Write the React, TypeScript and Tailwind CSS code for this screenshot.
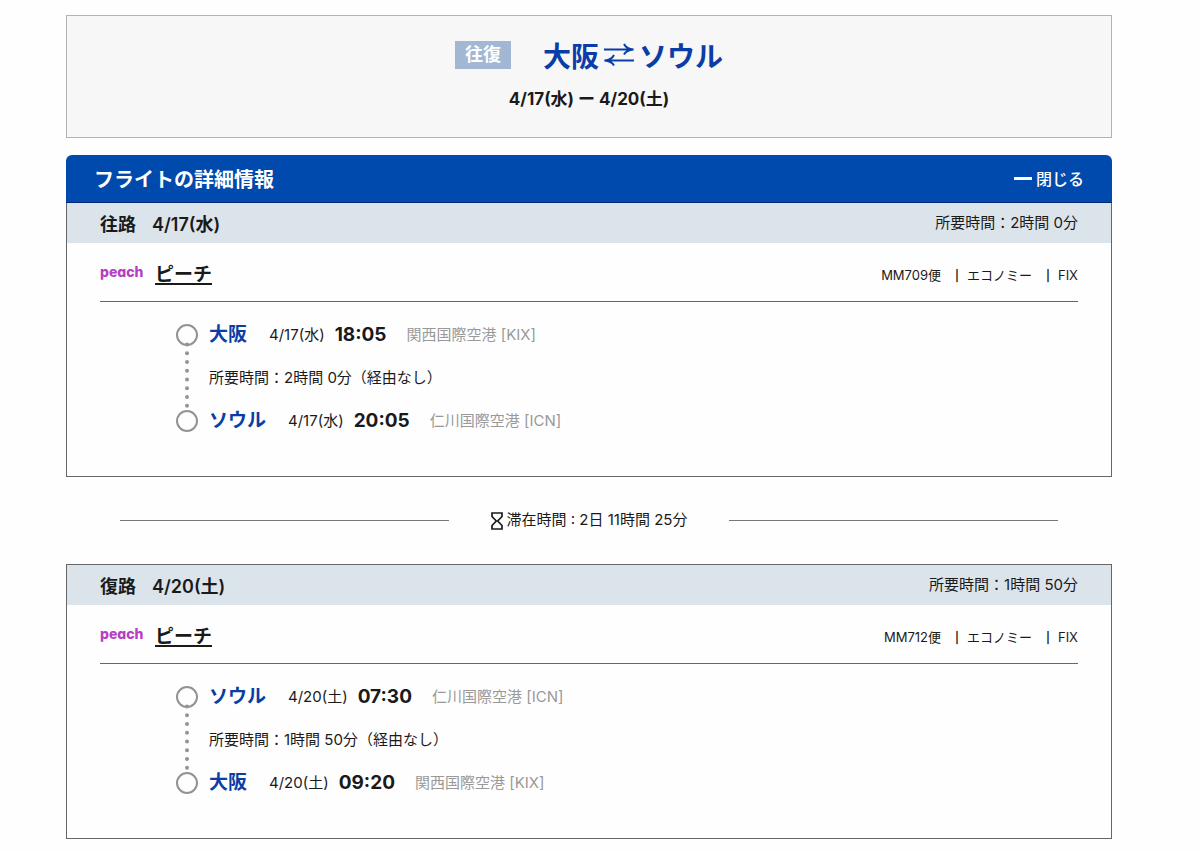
import { useState } from 'react';

type Stop = {
  city: string;
  time: string;
  airport: string;
};

type Flight = {
  label: string;
  date: string;
  duration: string;
  flightNo: string;
  from: Stop;
  to: Stop;
};

const osaka = { city: '大阪', airport: '関西国際空港 [KIX]' };
const seoul = { city: 'ソウル', airport: '仁川国際空港 [ICN]' };

const outbound: Flight = {
  label: '往路',
  date: '4/17(水)',
  duration: '2時間 0分',
  flightNo: 'MM709便',
  from: { ...osaka, time: '18:05' },
  to: { ...seoul, time: '20:05' },
};

const inbound: Flight = {
  label: '復路',
  date: '4/20(土)',
  duration: '1時間 50分',
  flightNo: 'MM712便',
  from: { ...seoul, time: '07:30' },
  to: { ...osaka, time: '09:20' },
};

function RoundTripArrows() {
  return (
    <svg className="mb-1 h-6 w-8" viewBox="0 0 32 24" fill="none" stroke="currentColor" strokeWidth="2" aria-hidden="true">
      <path d="M1 6.500h29M21 1c1.500 3 4.500 5 9.500 5.500c-5 .5-8 2-9.500 5" />
      <path d="M31 17.500H2M11 12c-1.500 3-4.500 5-9.500 5.500c5 .5 8 2 9.500 5" />
    </svg>
  );
}

function Hourglass() {
  return (
    <svg className="h-[18px] w-3" viewBox="0 0 12 18" fill="none" stroke="currentColor" strokeWidth="1.7" aria-hidden="true">
      <path d="M1 1h10v3.500L6.700 9L11 13.500V17H1v-3.500L5.300 9L1 4.500z" />
    </svg>
  );
}

function RouteLine() {
  return (
    <svg className="h-[108px] w-[22px] shrink-0" viewBox="0 0 22 108" fill="none" stroke="#939393" aria-hidden="true">
      <circle cx="11" cy="11" r="10" strokeWidth="2" />
      <path d="M11 20.500V86" strokeWidth="4" strokeLinecap="round" strokeDasharray="0 8.750" />
      <circle cx="11" cy="97" r="10" strokeWidth="2" />
    </svg>
  );
}

function StopRow({ stop, date }: { stop: Stop; date: string }) {
  return (
    <p className="flex h-[22px] items-center text-[15px]">
      <span className="text-[19px] font-bold text-[#0a3da6]">{stop.city}</span>
      <span className="ml-[22px]">{date}</span>
      <time className="ml-[10px] text-[19px] font-bold">{stop.time}</time>
      <span className="ml-5 text-[#999]">{stop.airport}</span>
    </p>
  );
}

function FlightDetail({ flight }: { flight: Flight }) {
  return (
    <>
      <div className="flex h-10 items-center justify-between bg-[#dce4eb] px-[33px]">
        <h3 className="flex gap-4 pt-1 text-lg font-semibold">
          <span>{flight.label}</span>
          <span>{flight.date}</span>
        </h3>
        <p className="text-[15px]">所要時間：{flight.duration}</p>
      </div>
      <div className="px-[33px] pb-11">
        <div className="flex h-[59px] items-center justify-between border-b border-[#666] pt-[6px]">
          <div className="flex items-center gap-3">
            <span className="w-[43px] pb-[6px] text-[14px] leading-5 font-extrabold text-[#b83fc4] [font-feature-settings:'cv11']">
              peach
            </span>
            <a href="#peach" className="text-[19px] font-semibold underline decoration-2 underline-offset-2">
              ピーチ
            </a>
          </div>
          <ul className="flex items-center pt-[2px] text-[13px]">
            <li>{flight.flightNo}</li>
            <li className="ml-[14px] flex items-center gap-2">
              <span className="text-[11px] font-semibold">|</span>エコノミー
            </li>
            <li className="ml-[14px] flex items-center gap-2">
              <span className="text-[11px] font-semibold">|</span>FIX
            </li>
          </ul>
        </div>
        <div className="flex gap-[11px] pt-[22px] pl-[76px]">
          <RouteLine />
          <div className="flex flex-col justify-between">
            <StopRow stop={flight.from} date={flight.date} />
            <p className="text-[15px] leading-[22px]">所要時間：{flight.duration}（経由なし）</p>
            <StopRow stop={flight.to} date={flight.date} />
          </div>
        </div>
      </div>
    </>
  );
}

export default function App() {
  const [open, setOpen] = useState(true);

  return (
    <main
      lang="ja"
      className="min-h-screen bg-[#fefefe] pt-[15px] pr-[88px] pb-3 pl-[66px] font-['Inter','Noto_Sans_CJK_JP',sans-serif] text-[#1a1a1a]"
    >
      <header className="flex h-[123px] flex-col items-center border border-[#b3b3b3] bg-[#f7f7f7] pt-5">
        <div className="flex items-center gap-8">
          <span className="mb-1 flex h-7 items-center bg-[#a2b7d3] px-[10px] text-lg font-bold text-white">往復</span>
          <h1 className="flex items-center gap-1 text-[28px] leading-[42px] font-bold text-[#0a3da6]">
            大阪
            <RoundTripArrows />
            ソウル
          </h1>
        </div>
        <p className="text-[17px] leading-[42px] font-bold">4/17(水) ー 4/20(土)</p>
      </header>

      <section className="mt-[17px]">
        <div className="flex h-12 items-center justify-between rounded-t-md border-b border-[#00297a] bg-[#004aad] px-7 text-white">
          <h2 className="pt-[2px] text-xl font-bold">フライトの詳細情報</h2>
          <button
            type="button"
            aria-expanded={open}
            onClick={() => setOpen(!open)}
            className="flex cursor-pointer items-center gap-1 text-base font-medium"
          >
            <span className="h-[3px] w-[18px] bg-white" />
            {open ? '閉じる' : '開く'}
          </button>
        </div>

        {open && (
          <>
            <article className="border border-t-0 border-[#666]">
              <FlightDetail flight={outbound} />
            </article>

            <div className="flex h-[87px] items-center gap-[42px] px-[54px]">
              <span className="h-px flex-1 bg-[#777]" />
              <p className="flex items-center gap-1 text-[15px]">
                <Hourglass />
                滞在時間 : 2日 11時間 25分
              </p>
              <span className="h-px flex-1 bg-[#777]" />
            </div>

            <article className="border border-[#666]">
              <FlightDetail flight={inbound} />
            </article>
          </>
        )}
      </section>
    </main>
  );
}
